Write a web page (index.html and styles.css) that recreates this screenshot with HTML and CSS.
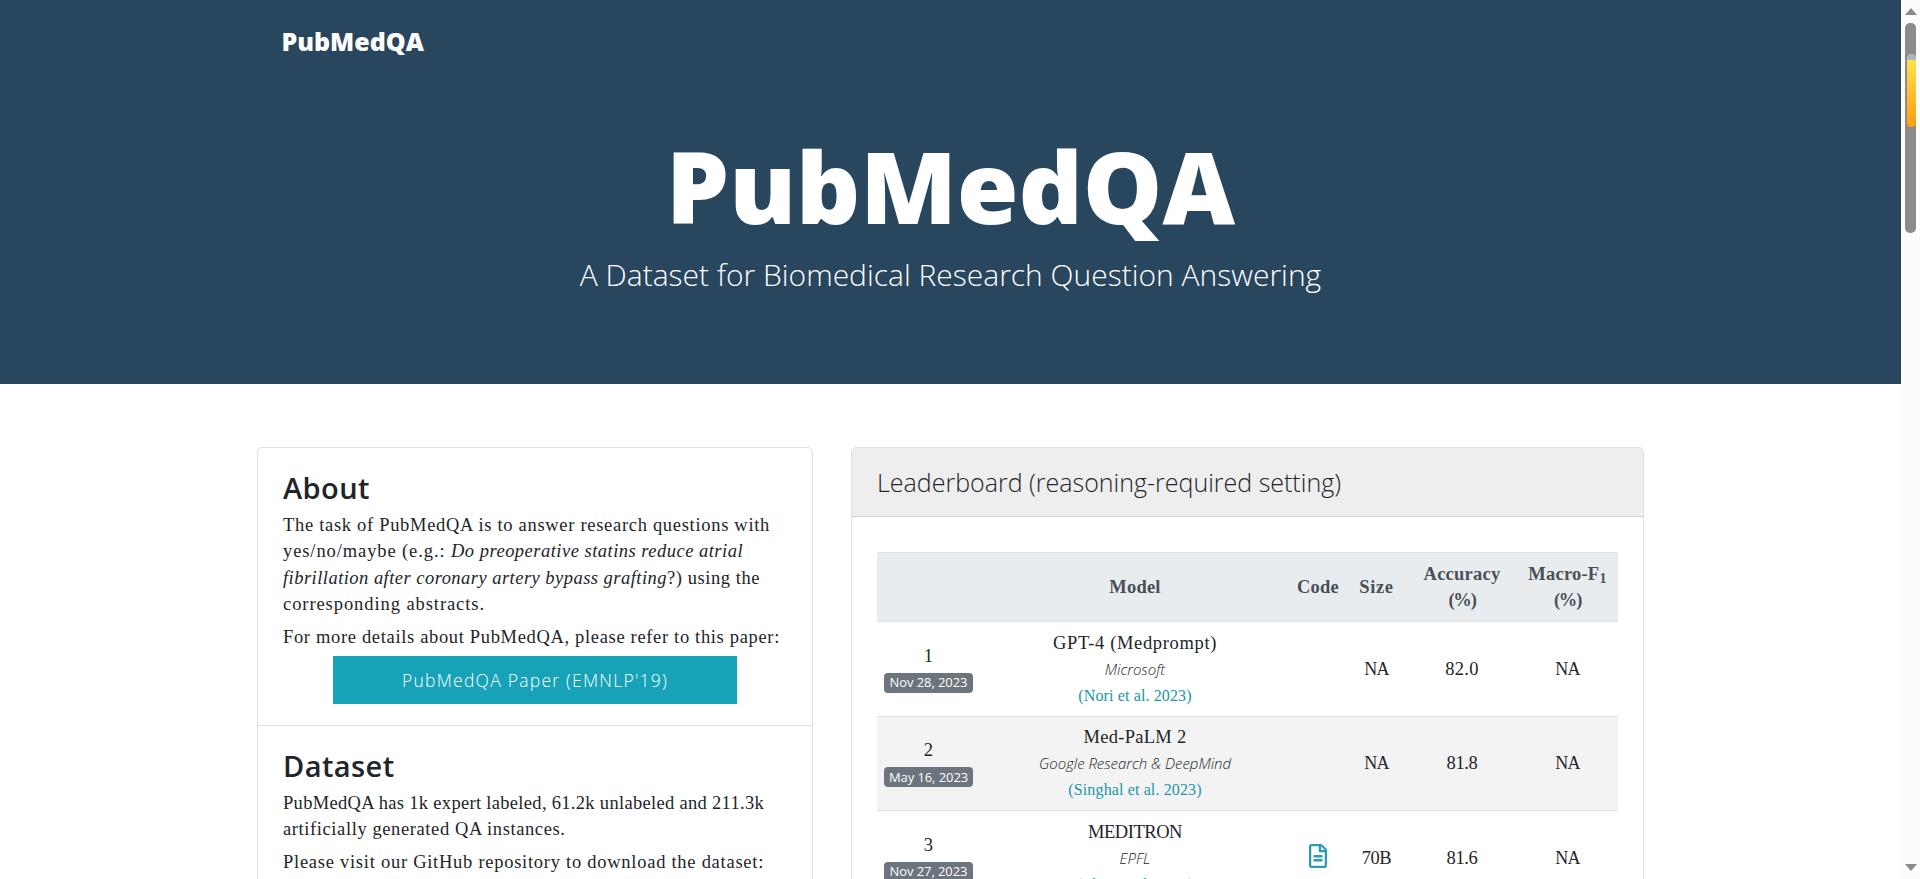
FILE: index.html
```
<!DOCTYPE html>
<html lang="en">
<head>
<meta charset="utf-8">
<title>PubMedQA Homepage</title>
<link rel="stylesheet" href="styles.css">
</head>
<body>
<div class="page">
  <header class="masthead">
    <nav class="navbar"><a class="brand">PubMedQA</a></nav>
    <div class="hero">
      <h1>PubMedQA</h1>
      <p>A Dataset for Biomedical Research Question Answering</p>
    </div>
  </header>
  <main class="content">
    <section class="card about-card">
      <div class="card-block">
        <h2>About</h2>
        <p><span class="ln l1">The task of PubMedQA is to answer research questions with</span>
        <span class="ln"><span class="l2a">yes/no/maybe (e.g.:&nbsp;</span><i class="l2b">Do preoperative statins reduce atrial</i></span>
        <span class="ln"><i class="l3a">fibrillation after coronary artery bypass grafting</i><span class="l3b">?) using the</span></span>
        <span class="ln l4">corresponding abstracts.</span></p>
        <p><span class="ln l5">For more details about PubMedQA, please refer to this paper:</span></p>
        <a class="btn">PubMedQA Paper (EMNLP'19)</a>
      </div>
      <div class="card-block">
        <h2>Dataset</h2>
        <p><span class="ln l6">PubMedQA has 1k expert labeled, 61.2k unlabeled and 211.3k</span>
        <span class="ln l7">artificially generated QA instances.</span></p>
        <p><span class="ln l8">Please visit our GitHub repository to download the dataset:</span></p>
      </div>
    </section>
    <section class="card board-card">
      <div class="card-header"><h3>Leaderboard (reasoning-required setting)</h3></div>
      <div class="card-body">
        <table class="board">
          <colgroup><col class="c-rank"><col class="c-model"><col class="c-code"><col class="c-size"><col class="c-acc"><col class="c-f1"></colgroup>
          <thead><tr><th></th><th>Model</th><th>Code</th><th class="size-head">Size</th><th>Accuracy<br><span class="pct">(%)</span></th><th>Macro-F<sub>1</sub><br><span class="pct">(%)</span></th></tr></thead>
          <tbody>
            <tr><td><div class="rank">1</div><span class="badge">Nov 28, 2023</span></td>
              <td><div class="name m1">GPT-4 (Medprompt)</div><div class="org">Microsoft</div><a class="ref">(Nori et al. 2023)</a></td>
              <td></td><td class="na">NA</td><td>82.0</td><td class="na">NA</td></tr>
            <tr class="odd"><td><div class="rank">2</div><span class="badge">May 16, 2023</span></td>
              <td><div class="name m2">Med-PaLM 2</div><div class="org">Google Research &amp; DeepMind</div><a class="ref">(Singhal et al. 2023)</a></td>
              <td></td><td class="na">NA</td><td class="narrow">81.8</td><td class="na">NA</td></tr>
            <tr><td><div class="rank">3</div><span class="badge">Nov 27, 2023</span></td>
              <td><div class="name m3">MEDITRON</div><div class="org">EPFL</div><a class="ref">(Chen et al. 2023)</a></td>
              <td><svg class="file-icon" viewBox="0 0 384 512"><path d="M288 248v28c0 6.600-5.400 12-12 12H108c-6.600 0-12-5.400-12-12v-28c0-6.600 5.400-12 12-12h168c6.600 0 12 5.400 12 12zm-12 72H108c-6.600 0-12 5.400-12 12v28c0 6.600 5.400 12 12 12h168c6.600 0 12-5.400 12-12v-28c0-6.600-5.400-12-12-12zm108-188.100V464c0 26.500-21.500 48-48 48H48c-26.500 0-48-21.500-48-48V48C0 21.500 21.500 0 48 0h204.100C264.800 0 277 5.100 286 14.100L369.900 98c9 8.900 14.100 21.200 14.100 33.900zm-128-80V128h76.100L256 51.900zM336 464V176H232c-13.300 0-24-10.700-24-24V48H48v416h288z"/></svg></td><td class="narrow">70B</td><td class="narrow">81.6</td><td class="na">NA</td></tr>
          </tbody>
        </table>
      </div>
    </section>
  </main>
</div>
<aside class="scrollbar"><i class="up"></i><div class="thumb"><div class="mark"></div></div><i class="down"></i></aside>
</body>
</html>
```
FILE: styles.css
```
* { box-sizing: border-box; }
body { margin: 0; display: flex; width: 1920px; height: 879px; overflow: hidden; background: #fff; color: #212529; font: 18.5px/26.25px "Liberation Serif", serif; }
h1, h2, h3, p { margin: 0; }
.page { width: 1901px; height: 879px; overflow: hidden; }
.masthead { height: 384px; background: #29465f; color: #fff; font-family: "Open Sans", sans-serif; }
.navbar { height: 84px; padding: 23px 0 0 281.5px; }
.brand { font-size: 25px; font-weight: 800; line-height: 36px; }
.hero { text-align: center; padding-top: 46px; }
.hero h1 { font-size: 100px; font-weight: 800; line-height: 110px; letter-spacing: -0.1px; }
.hero p { font-size: 30px; font-weight: 300; line-height: 45px; padding-top: 12px; }
.content { display: flex; gap: 38px; align-items: flex-start; padding: 63px 0 0 257px; }
.card { border: 1px solid #dfdfdf; border-radius: 5px; background: #fff; overflow: hidden; }
.about-card { width: 556px; height: 600px; }
.board-card { width: 793px; height: 600px; }
.card-block { height: 277px; padding: 22px 25px; border-bottom: 1px solid #dfdfdf; }
.card-block h2 { font: 600 29px/35px "Open Sans", sans-serif; letter-spacing: 0.42px; margin-bottom: 7px; }
.card-block p { margin-bottom: 7px; }
.card-block + .card-block p { margin-bottom: 6px; }
.ln { display: block; white-space: nowrap; }
.l1 { letter-spacing: 0.693px; }
.l2a { letter-spacing: 0.899px; }
.l2b { letter-spacing: 0.486px; }
.l3a { letter-spacing: 0.468px; }
.l3b { letter-spacing: 0.557px; }
.l4 { letter-spacing: 0.924px; }
.l5 { letter-spacing: 0.662px; }
.l6 { letter-spacing: 0.306px; }
.l7 { letter-spacing: 0.599px; }
.l8 { letter-spacing: 0.733px; }
.card-block:first-child { height: 278px; }
.btn { display: flex; align-items: center; justify-content: center; width: 404px; height: 48px; margin: -1px auto 0; background: #17a2b8; color: #fff; font: 300 17.5px/26px "Open Sans", sans-serif; letter-spacing: 1.24px; }
.card-header { height: 69px; padding: 18px 25px; background: #eee; border-bottom: 1px solid #d0d0d0; }
.card-header h3 { font: 300 25px/32px "Open Sans", sans-serif; }
.card-body { padding: 35px 25px; }
.board { table-layout: fixed; width: 741px; border-spacing: 0; text-align: center; }
.c-rank { width: 103px; } .c-model { width: 310px; } .c-code { width: 56px; } .c-size { width: 61px; } .c-acc { width: 110px; } .c-f1 { width: 101px; }
.board th, .board td { padding: 0; border-top: 1px solid #dee2e6; vertical-align: middle; height: 95px; letter-spacing: 0.3px; }
.board th { height: 69px; background: #e9ecef; color: #495057; font-weight: 700; letter-spacing: 0.22px; }
.board .odd td { background: #f3f3f3; height: 94px; }
.board th.size-head { letter-spacing: 0.66px; }
.board td.na { font-size: 18px; letter-spacing: -0.8px; }
.board td.narrow { letter-spacing: -0.4px; }
.pct { letter-spacing: -1.2px; }
.board sub { font-size: 14px; line-height: 0; vertical-align: -3px; }
.rank { line-height: 25px; }
.badge { display: flex; align-items: center; justify-content: center; width: 89px; height: 20px; margin: 4px auto 2px 7px; border-radius: 4px; background: #6c757d; color: #fff; font: 400 13px/20px "Open Sans", sans-serif; letter-spacing: -0.08px; padding-bottom: 1px; }
.name { padding-top: 1px; line-height: 26px; }
.m1 { letter-spacing: 0.649px; }
.m2 { letter-spacing: 0.28px; }
.m3 { letter-spacing: -0.455px; }
.org { font: italic 300 15px/26px "Open Sans", sans-serif; letter-spacing: -0.03px; }
.ref { font-size: 16px; letter-spacing: 0.13px; color: #2196a8; }
.file-icon { width: 18px; height: 24px; fill: #2a9db5; display: block; margin: 0 auto 4px; }
.scrollbar { width: 19px; height: 879px; background: #fcfcfc; display: flex; flex-direction: column; align-items: center; padding: 8px 0; }
.up, .down { border: 6px solid transparent; border-top: 0; border-bottom: 7px solid #8b8b8b; }
.down { margin-top: auto; border-top: 7px solid #8b8b8b; border-bottom: 0; }
.thumb { width: 11px; height: 210px; margin-top: 8px; border-radius: 5px; background: #8b8b8b; padding: 31px 0 0 2px; }
.mark { width: 9px; height: 73px; border-radius: 4px; background: linear-gradient(#b0b4b6 0 6px, #ffe24a 6px, #ff9c12); }
```
